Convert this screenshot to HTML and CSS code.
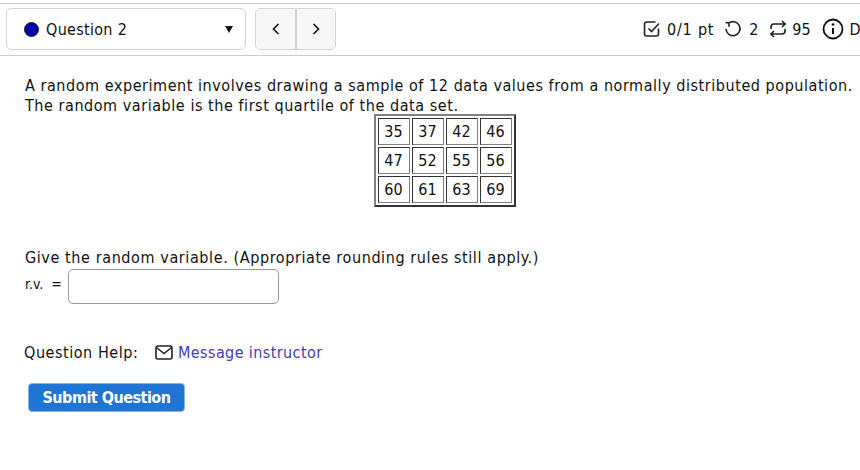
FILE: index.html
```html
<!DOCTYPE html>
<html lang="en">
<head>
<meta charset="utf-8">
<title>Question 2</title>
<link rel="stylesheet" href="styles.css">
</head>
<body>
<header class="bar">
  <div class="select">
    <span class="dot"></span>
    <span class="select-label">Question 2</span>
    <span class="caret"></span>
  </div>
  <div class="pager">
    <button class="page-btn" type="button" aria-label="Previous"><svg width="12" height="14" viewBox="0 0 12 14"><path d="M8.500 2 3.500 7l5 5" fill="none" stroke="#111" stroke-width="1.600"/></svg></button>
    <button class="page-btn" type="button" aria-label="Next"><svg width="12" height="14" viewBox="0 0 12 14"><path d="M3.500 2l5 5-5 5" fill="none" stroke="#111" stroke-width="1.600"/></svg></button>
  </div>
  <div class="stats">
    <svg class="icon" width="18" height="18" viewBox="0 0 18 18"><path d="M15.500 8.500v5.500a2 2 0 0 1-2 2H3.500a2 2 0 0 1-2-2V4a2 2 0 0 1 2-2h9" fill="none" stroke="#222" stroke-width="1.600"/><path d="M5.500 8.500l3 3 7.500-8" fill="none" stroke="#222" stroke-width="1.600"/></svg>
    <span class="stat stat-score">0/1 pt</span>
    <svg class="icon" width="18" height="18" viewBox="0 0 18 18"><path d="M4.600 3.200A7 7 0 1 1 2 9" fill="none" stroke="#222" stroke-width="1.600"/><path d="M1.500 2.500l3.300.5.300 3.700" fill="none" stroke="#222" stroke-width="1.600"/></svg>
    <span class="stat stat-tries">2</span>
    <svg class="icon" width="18" height="18" viewBox="0 0 18 18"><path d="M2 9V7a3 3 0 0 1 3-3h11M13 1l3.200 3L13 7M16 9v2a3 3 0 0 1-3 3H2M5 11l-3.200 3L5 17" fill="none" stroke="#222" stroke-width="1.600"/></svg>
    <span class="stat stat-count">95</span>
    <svg class="icon" width="22" height="22" viewBox="0 0 22 22"><circle cx="11" cy="11" r="9.500" fill="none" stroke="#111" stroke-width="1.800"/><path d="M11 10v6" stroke="#111" stroke-width="2"/><circle cx="11" cy="6.500" r="1.300" fill="#111"/></svg>
    <span class="stat stat-details">Details</span>
  </div>
</header>

<main class="question">
  <p class="prompt">A random experiment involves drawing a sample of 12 data values from a normally distributed population. The random variable is the first quartile of the data set.</p>
  <table class="data">
    <tr><td>35</td><td>37</td><td>42</td><td>46</td></tr>
    <tr><td>47</td><td>52</td><td>55</td><td>56</td></tr>
    <tr><td>60</td><td>61</td><td>63</td><td>69</td></tr>
  </table>
  <p class="ask">Give the random variable. (Appropriate rounding rules still apply.)</p>
  <div class="answer">
    <label class="answer-label" for="rv">r.v. =</label>
    <input class="answer-input" id="rv" type="text">
  </div>
  <div class="help">
    <span class="help-label">Question Help:</span>
    <svg class="mail" width="18" height="15" viewBox="0 0 18 15"><rect x="1" y="1" width="16" height="13" rx="2" fill="none" stroke="#222" stroke-width="1.600"/><path d="M1.500 2.500 9 8.500l7.500-6" fill="none" stroke="#222" stroke-width="1.600"/></svg>
    <a class="help-link" href="#">Message instructor</a>
  </div>
  <button class="submit" type="button">Submit Question</button>
</main>
</body>
</html>
```

FILE: styles.css
```css
html, body {
  margin: 0;
  padding: 0;
  background: #fff;
}
body {
  width: 860px;
  height: 470px;
  overflow: hidden;
  font-family: "DejaVu Sans", "Noto Sans", sans-serif;
  font-stretch: condensed;
  font-size: 16px;
  color: #111;
}
.bar {
  display: flex;
  align-items: flex-start;
  box-sizing: border-box;
  width: 860px;
  height: 53px;
  margin-top: 3px;
  padding: 4px 0 0 6px;
  border-top: 1px solid #ccc;
  border-bottom: 1px solid #ccc;
  overflow: hidden;
}
.select {
  display: flex;
  flex: none;
  align-items: center;
  box-sizing: border-box;
  width: 240px;
  height: 42px;
  padding: 0 8px 0 17px;
  border: 1px solid #d3d3d3;
  border-radius: 5px;
}
.dot {
  width: 13px;
  height: 13px;
  border: 1px solid #222;
  border-radius: 50%;
  background: #0000a8;
}
.select-label {
  flex: 1;
  margin-left: 7px;
  letter-spacing: 0.3px;
}
.caret {
  width: 0;
  height: 0;
  margin-right: 4px;
  border-left: 4.500px solid transparent;
  border-right: 4.500px solid transparent;
  border-top: 7px solid #111;
}
.pager {
  display: flex;
  flex: none;
  margin-left: 9px;
  border: 1px solid #d3d3d3;
  border-radius: 5px;
  overflow: hidden;
}
.page-btn {
  display: flex;
  align-items: center;
  justify-content: center;
  width: 39px;
  height: 40px;
  padding: 0;
  border: 0;
  background: #f7f7f7;
}
.page-btn + .page-btn {
  width: 40px;
  border-left: 2px solid #d0d0d0;
}
.stats {
  display: flex;
  flex: none;
  align-items: center;
  height: 42px;
  margin-left: 307px;
  white-space: nowrap;
  letter-spacing: 0.8px;
}
.stat {
  margin-left: 6px;
}
.stat-score { margin-right: 10px; }
.stat-tries { margin-left: 7px; margin-right: 10px; }
.stat-count { margin-left: 5px; margin-right: 11px; letter-spacing: 0; }
.question {
  padding: 20px 4px 0 25px;
}
.prompt {
  margin: 0;
  line-height: 20px;
  letter-spacing: 0.55px;
}
.data {
  margin: -2px auto 0;
  border: 2px solid;
  border-color: #808080 #333 #333 #808080;
  border-spacing: 2px;
  position: relative;
  left: 4px;
}
.data td {
  width: 30px;
  height: 25px;
  padding: 0;
  border: 1px solid;
  border-color: #333 #808080 #808080 #333;
  text-align: center;
  line-height: 20px;
}
.ask {
  margin: 40px 0 0;
  line-height: 22px;
  letter-spacing: 0.6px;
}
.answer {
  display: flex;
  align-items: center;
}
.answer-label {
  box-sizing: border-box;
  width: 43px;
  padding-bottom: 5px;
  font-size: 14px;
  word-spacing: 4px;
}
.answer-input {
  box-sizing: border-box;
  width: 211px;
  height: 35px;
  border: 1px solid #999;
  border-radius: 5px;
}
.help {
  display: flex;
  align-items: center;
  margin: 39px 0 0 -1px;
  letter-spacing: 0.4px;
}
.help-label {
  width: 131px;
  letter-spacing: 0.55px;
}
.mail {
  margin-right: 5px;
}
.help-link {
  color: #4040b0;
  text-decoration: none;
}
.submit {
  display: block;
  width: 157px;
  height: 29px;
  margin: 21px 0 0 3px;
  padding: 0;
  border: 1px solid #8ab4e0;
  border-radius: 4px;
  background: #1f75d3;
  color: #fff;
  font-family: inherit;
  font-stretch: inherit;
  font-size: 16px;
  font-weight: 700;
  letter-spacing: -0.5px;
}
```
